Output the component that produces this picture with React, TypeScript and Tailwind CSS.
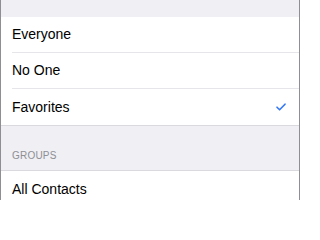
const rows = [
  { label: 'Everyone', checked: false },
  { label: 'No One', checked: false },
  { label: 'Favorites', checked: true },
];

function Check() {
  return (
    <svg width="10" height="8" viewBox="0 0 10 8" fill="none">
      <path d="M1 4.2 L3.6 6.8 L9 1.2" stroke="#3478f6" strokeWidth="1.6" strokeLinecap="round" strokeLinejoin="round" />
    </svg>
  );
}

export default function App() {
  return (
    <div
      className="w-[300px] h-[200px] overflow-hidden bg-[#efeff4] border-x border-[#8e8e93] text-black"
      style={{ fontFamily: '"Liberation Sans", Arial, sans-serif' }}
    >
      <div className="h-[17px]" />
      <div className="bg-white border-b border-[#d9d9de]">
        {rows.map((r, i) => (
          <div key={r.label} className="pl-[11px]">
            <div
              className={`h-[36px] flex items-center justify-between pr-[13px] ${
                i < rows.length - 1 ? 'border-b border-[#e6e6ea]' : ''
              }`}
            >
              <span className="text-[14px]">{r.label}</span>
              {r.checked && <Check />}
            </div>
          </div>
        ))}
      </div>
      <div className="h-[44px] flex items-end pl-[11px] pb-[7px]">
        <span className="text-[10px] text-[#8e8e93] tracking-[0.2px]">GROUPS</span>
      </div>
      <div className="bg-white border-t border-[#d9d9de]">
        <div className="pl-[11px] h-[36px] flex items-center">
          <span className="text-[14px]">All Contacts</span>
        </div>
      </div>
    </div>
  );
}
